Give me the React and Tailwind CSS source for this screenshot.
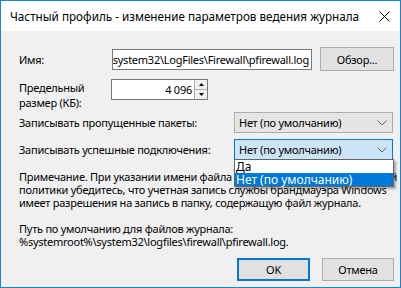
export default function App() {
  const chevron = (
    <svg width="10" height="6" viewBox="0 0 10 6" className="shrink-0">
      <path d="M0.5 0.5 L5 5 L9.5 0.5" fill="none" stroke="#606060" strokeWidth="1" />
    </svg>
  );
  return (
    <div className="w-[401px] h-[288px] overflow-hidden border border-[#1883d7] bg-[#f0f0f0] flex flex-col text-black text-[11px] leading-[15px] font-['Noto_Sans',sans-serif] whitespace-nowrap">
      {/* title bar */}
      <div className="h-[30px] bg-white flex items-center justify-between pl-[9px] pr-[10px] shrink-0 text-[11.7px]">
        <span>Частный профиль - изменение параметров ведения журнала</span>
        <svg width="11" height="11" viewBox="0 0 11 11">
          <path d="M0.5 0.5 L10.5 10.5 M10.5 0.5 L0.5 10.5" stroke="#000" strokeWidth="1" />
        </svg>
      </div>

      <div className="flex-1 flex flex-col pl-[18px] pr-[6px] pt-[16px] tracking-[-0.25px]">
        {/* Имя */}
        <div className="flex items-center h-[24px]">
          <div className="w-[93px]">Имя:</div>
          <div className="w-[200px] h-[21px] border border-[#7a7a7a] bg-white flex justify-end items-center overflow-hidden pr-[2px]">
            <span>%systemroot%\system32\LogFiles\Firewall\pfirewall.log</span>
          </div>
          <div className="ml-[8px] w-[74px] h-[24px] border border-[#adadad] bg-[#e1e1e1] flex items-center justify-center">
            Обзор...
          </div>
        </div>

        {/* Размер */}
        <div className="flex items-start mt-[8px]">
          <div className="w-[92px] pt-[1px]">
            <div>Предельный</div>
            <div>размер (КБ):</div>
          </div>
          <div className="w-[97px] h-[21px] border border-[#7a7a7a] bg-white flex">
            <div className="flex-1 flex items-center justify-end pr-[2px]">4 096</div>
            <div className="w-[13px] flex flex-col border-l border-[#adadad]">
              <div className="flex-1 bg-[#f0f0f0] border-b border-[#adadad] flex items-center justify-center">
                <svg width="5" height="3" viewBox="0 0 5 3"><path d="M0 3 L2.5 0 L5 3 Z" fill="#000" /></svg>
              </div>
              <div className="flex-1 bg-[#f0f0f0] flex items-center justify-center">
                <svg width="5" height="3" viewBox="0 0 5 3"><path d="M0 0 L2.5 3 L5 0 Z" fill="#000" /></svg>
              </div>
            </div>
          </div>
        </div>

        {/* Пропущенные */}
        <div className="flex items-center mt-[2px]">
          <div className="w-[215px]">Записывать пропущенные пакеты:</div>
          <div className="w-[159px] h-[21px] border border-[#acacac] bg-[#e5e5e5] flex items-center justify-between pl-[4px] pr-[5px]">
            <span>Нет (по умолчанию)</span>
            {chevron}
          </div>
        </div>

        {/* Успешные */}
        <div className="flex items-center mt-[6px]">
          <div className="w-[215px]">Записывать успешные подключения:</div>
          <div className="relative w-[159px] h-[21px]">
            <div className="w-full h-full border border-[#0078d7] bg-[#cce4f7] flex items-center justify-between pl-[4px] pr-[5px]">
              <span>Нет (по умолчанию)</span>
              {chevron}
            </div>
            <div className="absolute left-0 top-[20px] w-[160px] z-10 border border-[#646464] bg-white shadow-[2px_2px_2px_rgba(0,0,0,0.3)] text-[12px] leading-[13px] tracking-normal">
              <div className="h-[13px] pl-[1px]">Да</div>
              <div className="h-[13px] pl-[1px] bg-[#0078d7] text-white">Нет (по умолчанию)</div>
            </div>
          </div>
        </div>

        {/* Примечание */}
        <div className="mt-[10px] leading-[13px]">
          <div>Примечание. При указании имени файла журнала с помощью групповой</div>
          <div>политики убедитесь, что учетная запись службы брандмауэра Windows</div>
          <div>имеет разрешения на запись в папку, содержащую файл журнала.</div>
        </div>

        <div className="mt-[13px] leading-[13px]">
          <div>Путь по умолчанию для файлов журнала:</div>
          <div>%systemroot%\system32\logfiles\firewall\pfirewall.log.</div>
        </div>

        <div className="flex justify-end mt-[10px]">
          <div className="w-[73px] h-[23px] border-2 border-[#0078d7] bg-[#e1e1e1] flex items-center justify-center">OK</div>
          <div className="ml-[12px] w-[72px] h-[23px] border border-[#adadad] bg-[#e1e1e1] flex items-center justify-center">Отмена</div>
        </div>
      </div>
    </div>
  );
}
